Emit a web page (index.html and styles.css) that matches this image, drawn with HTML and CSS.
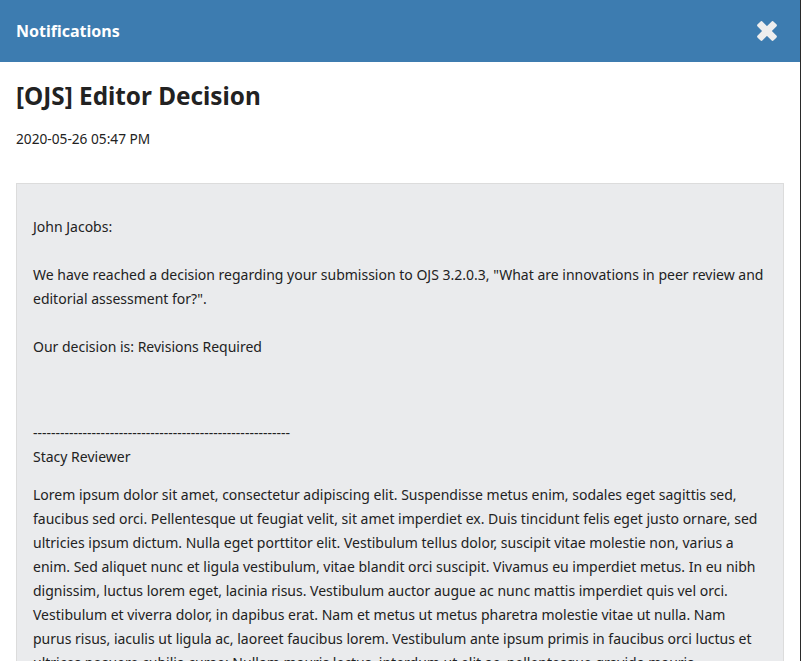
FILE: index.html
```html
<!DOCTYPE html>
<html lang="en">
<head>
<meta charset="utf-8">
<title>Notifications</title>
<link rel="stylesheet" href="styles.css">
</head>
<body>
<div class="modal">
  <header class="modal-header">
    <h2 class="modal-title">Notifications</h2>
    <button class="close" aria-label="Close">
      <svg width="22" height="22" viewBox="0 0 22 22" aria-hidden="true">
        <g transform="translate(11 11)" fill="#eeeeee">
          <rect x="-11.35" y="-3.5" width="22.7" height="7" rx="1.6" transform="rotate(45)"/>
          <rect x="-11.35" y="-3.5" width="22.7" height="7" rx="1.6" transform="rotate(-45)"/>
        </g>
      </svg>
    </button>
  </header>
  <div class="modal-body">
    <h1 class="subject">[OJS] Editor Decision</h1>
    <div class="date">2020-05-26 05:47 PM</div>
    <div class="message">
      <p>John Jacobs:<br><br>We have reached a decision regarding your submission to OJS 3.2.0.3, "What are innovations in peer review and editorial assessment for?".<br><br>Our decision is: Revisions Required<br><br><br></p>
      <p>---------------------------------------------------------<br>Stacy Reviewer</p>
      <p>Lorem ipsum dolor sit amet, consectetur adipiscing elit. Suspendisse metus enim, sodales eget sagittis sed, faucibus sed orci. Pellentesque ut feugiat velit, sit amet imperdiet ex. Duis tincidunt felis eget justo ornare, sed ultricies ipsum dictum. Nulla eget porttitor elit. Vestibulum tellus dolor, suscipit vitae molestie non, varius a enim. Sed aliquet nunc et ligula vestibulum, vitae blandit orci suscipit. Vivamus eu imperdiet metus. In eu nibh dignissim, luctus lorem eget, lacinia risus. Vestibulum auctor augue ac nunc mattis imperdiet quis vel orci. Vestibulum et viverra dolor, in dapibus erat. Nam et metus ut metus pharetra molestie vitae ut nulla. Nam purus risus, iaculis ut ligula ac, laoreet faucibus lorem. Vestibulum ante ipsum primis in faucibus orci luctus et ultrices posuere cubilia curae; Nullam mauris lectus, interdum ut elit ac, pellentesque gravida mauris.</p>
    </div>
  </div>
</div>
</body>
</html>
```

FILE: styles.css
```css
html, body {
  margin: 0;
  padding: 0;
}
body {
  background: #2a2a2a;
  font-family: "Noto Sans", "Open Sans", sans-serif;
  color: #222222;
  height: 661px;
  overflow: hidden;
}
.modal {
  width: 800px;
  background: #ffffff;
  min-height: 661px;
}
.modal-header {
  height: 62px;
  background: #3d7cb0;
  display: flex;
  align-items: center;
  justify-content: space-between;
  padding: 0 22px 0 16px;
}
.modal-title {
  margin: 0;
  color: #ffffff;
  font-size: 16px;
  font-weight: 700;
  line-height: 20px;
}
.close {
  background: none;
  border: 0;
  padding: 0;
  width: 22px;
  height: 22px;
  display: flex;
  cursor: pointer;
}
.modal-body {
  padding: 0 16px;
}
.subject {
  margin: 19px 0 0;
  font-size: 24.3px;
  line-height: 30px;
  font-weight: 700;
  color: #222222;
}
.date {
  margin-top: 18px;
  font-size: 13.7px;
  line-height: 20px;
  color: #222222;
}
.message {
  margin-top: 34px;
  background: #eaebed;
  border: 1px solid #dcdcdc;
  padding: 17px 16px 16px;
  font-size: 14px;
  line-height: 24px;
}
.message p {
  margin: 14px 0 0;
}
```
